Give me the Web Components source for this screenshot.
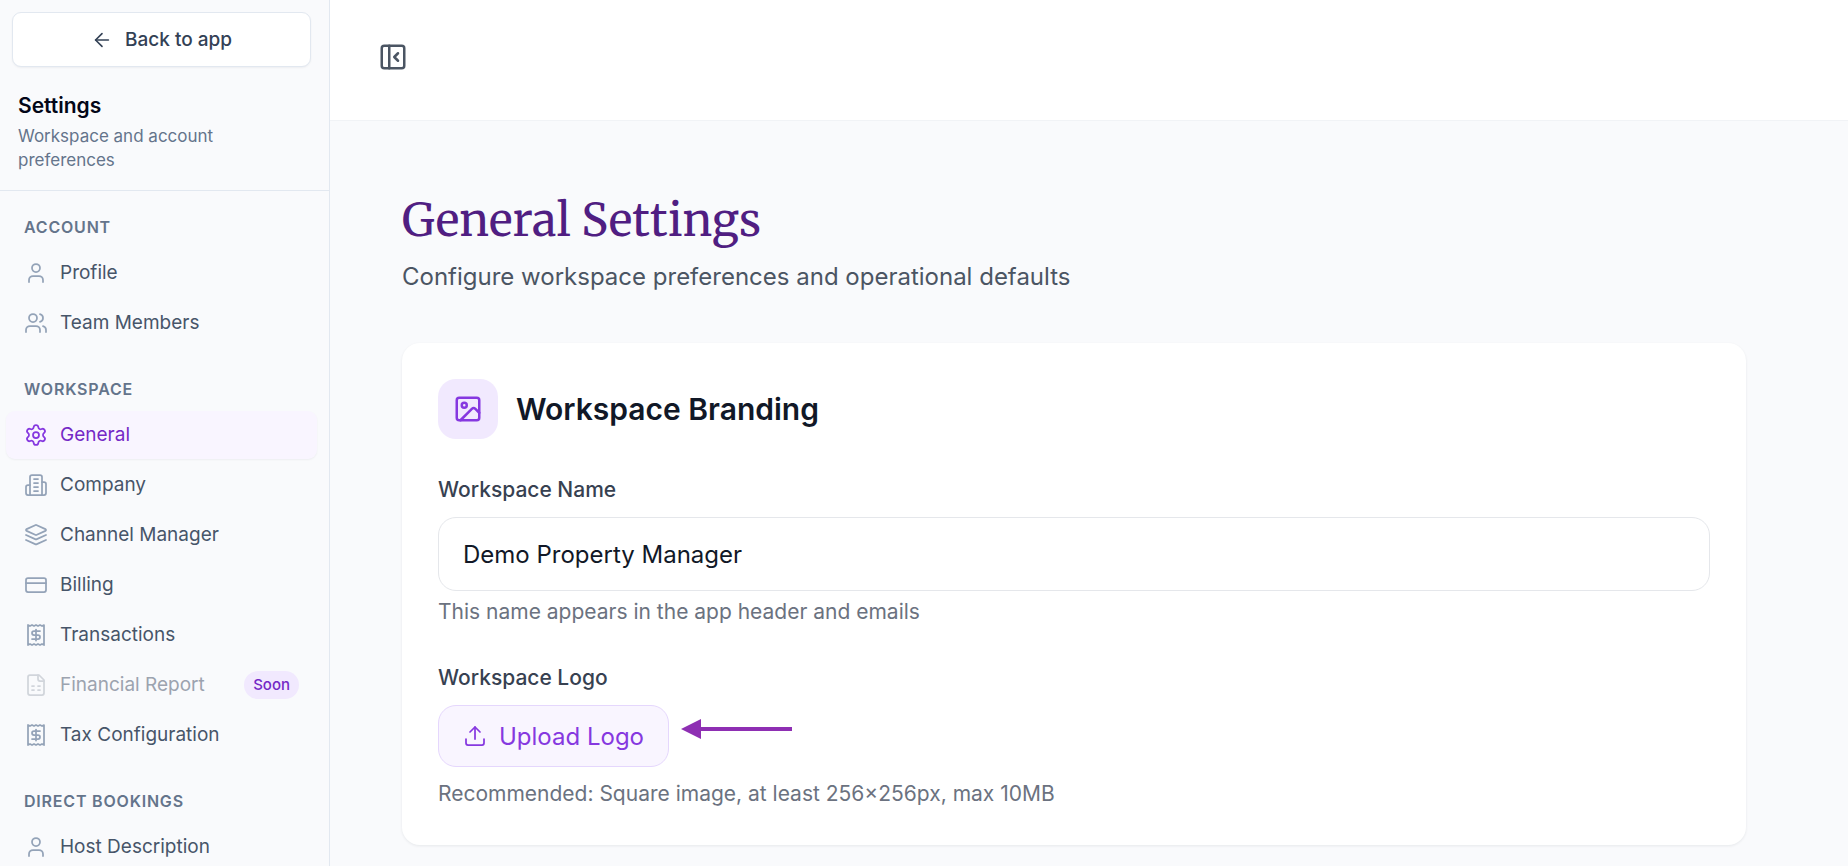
<!DOCTYPE html>
<html lang="en">
<head>
<meta charset="utf-8">
<meta name="viewport" content="width=device-width, initial-scale=1">
<title>General Settings</title>
<style>
	body {
		margin: 0;
		font-family: Inter, 'Liberation Sans', sans-serif;
		background: #f9fafc;
		color: #0f172a;
	}
</style>
</head>
<body>
<settings-app>
	<settings-sidebar slot="sidebar">
		<nav-group label="Account">
			<nav-item icon="user">Profile</nav-item>
			<nav-item icon="users">Team Members</nav-item>
		</nav-group>
		<nav-group label="Workspace">
			<nav-item icon="settings" active>General</nav-item>
			<nav-item icon="building">Company</nav-item>
			<nav-item icon="layers">Channel Manager</nav-item>
			<nav-item icon="card">Billing</nav-item>
			<nav-item icon="receipt">Transactions</nav-item>
			<nav-item icon="sheet" badge="Soon" disabled>Financial Report</nav-item>
			<nav-item icon="receipt">Tax Configuration</nav-item>
		</nav-group>
		<nav-group label="Direct Bookings">
			<nav-item icon="user">Host Description</nav-item>
		</nav-group>
	</settings-sidebar>

	<page-heading>
		General Settings
		<span slot="description">Configure workspace preferences and operational defaults</span>
	</page-heading>
	<settings-card icon="image" heading="Workspace Branding">
		<text-field
			label="Workspace Name"
			value="Demo Property Manager"
			hint="This name appears in the app header and emails"
		></text-field>
		<upload-field
			label="Workspace Logo"
			action="Upload Logo"
			hint="Recommended: Square image, at least 256×256px, max 10MB"
		></upload-field>
	</settings-card>
</settings-app>

<script>
const ICONS = {
	back: '<path d="m12 19-7-7 7-7"/><path d="M19 12H5"/>',
	panel: '<rect width="18" height="18" x="3" y="3" rx="2"/><path d="M9 3v18"/><path d="m16 15-3-3 3-3"/>',
	user: '<path d="M19 21v-2a4 4 0 0 0-4-4H9a4 4 0 0 0-4 4v2"/><circle cx="12" cy="7" r="4"/>',
	users: '<path d="M16 21v-2a4 4 0 0 0-4-4H6a4 4 0 0 0-4 4v2"/><circle cx="9" cy="7" r="4"/><path d="M22 21v-2a4 4 0 0 0-3-3.87"/><path d="M16 3.13a4 4 0 0 1 0 7.75"/>',
	settings: '<path d="M9.671 4.136a2.34 2.34 0 0 1 4.659 0 2.34 2.34 0 0 0 3.319 1.915 2.34 2.34 0 0 1 2.33 4.033 2.34 2.34 0 0 0 0 3.831 2.34 2.34 0 0 1-2.33 4.033 2.34 2.34 0 0 0-3.319 1.915 2.34 2.34 0 0 1-4.659 0 2.34 2.34 0 0 0-3.32-1.915 2.34 2.34 0 0 1-2.33-4.033 2.34 2.34 0 0 0 0-3.831A2.34 2.34 0 0 1 6.35 6.051a2.34 2.34 0 0 0 3.319-1.915"/><circle cx="12" cy="12" r="3"/>',
	building: '<path d="M6 22V4a2 2 0 0 1 2-2h8a2 2 0 0 1 2 2v18Z"/><path d="M6 12H4a2 2 0 0 0-2 2v6a2 2 0 0 0 2 2h2"/><path d="M18 9h2a2 2 0 0 1 2 2v9a2 2 0 0 1-2 2h-2"/><path d="M10 6h4"/><path d="M10 10h4"/><path d="M10 14h4"/><path d="M10 18h4"/>',
	layers: '<path d="m12.83 2.18a2 2 0 0 0-1.66 0L2.6 6.08a1 1 0 0 0 0 1.83l8.58 3.91a2 2 0 0 0 1.66 0l8.58-3.9a1 1 0 0 0 0-1.83Z"/><path d="m22 12-9.17 4.16a2 2 0 0 1-1.66 0L2 12"/><path d="m22 17-9.17 4.16a2 2 0 0 1-1.66 0L2 17"/>',
	card: '<rect width="20" height="14" x="2" y="5" rx="2"/><path d="M2 10h20"/>',
	receipt: '<path d="M4 2v20l2-1 2 1 2-1 2 1 2-1 2 1 2-1 2 1V2l-2 1-2-1-2 1-2-1-2 1-2-1-2 1Z"/><path d="M16 8h-6a2 2 0 1 0 0 4h4a2 2 0 1 1 0 4H8"/><path d="M12 17.5v-11"/>',
	sheet: '<path d="M15 2H6a2 2 0 0 0-2 2v16a2 2 0 0 0 2 2h12a2 2 0 0 0 2-2V7Z"/><path d="M14 2v4a2 2 0 0 0 2 2h4"/><path d="M8 13h2"/><path d="M14 13h2"/><path d="M8 17h2"/><path d="M14 17h2"/>',
	image: '<rect width="18" height="18" x="3" y="3" rx="2"/><circle cx="9" cy="9" r="2"/><path d="m21 15-3.09-3.09a2 2 0 0 0-2.82 0L6 21"/>',
	upload: '<path d="M12 3v12"/><path d="m17 8-5-5-5 5"/><path d="M21 15v4a2 2 0 0 1-2 2H5a2 2 0 0 1-2-2v-4"/>',
};

function icon(name, size, stroke = 2) {
	return `<svg width="${size}" height="${size}" viewBox="0 0 24 24" fill="none" stroke="currentColor" stroke-width="${stroke}" stroke-linecap="round" stroke-linejoin="round" aria-hidden="true">${ICONS[name]}</svg>`;
}

// Shared by every element below
const BASE = `
	*, *::before, *::after { box-sizing: border-box; }
	:host { display: block; box-sizing: border-box; }
	:host([hidden]) { display: none; }
	h1, h2, p { margin: 0; }
	button, input { font: inherit; }
	button { cursor: pointer; }
	svg { display: block; flex: none; }
`;

class BaseElement extends HTMLElement {
	constructor() {
		super();
		this.attachShadow({ mode: 'open' });
	}

	connectedCallback() {
		this.shadowRoot.innerHTML = `<style>${BASE}${this.styles()}</style>${this.markup()}`;
	}
}

class SettingsApp extends BaseElement {
	styles() {
		return `
			:host { display: flex; height: 100vh; overflow: hidden; }
			.content { flex: 1; min-width: 0; overflow: hidden; }
			header {
				display: flex;
				align-items: flex-start;
				min-height: 121px;
				padding: 36px 42px;
				background: #fff;
				border-bottom: 1px solid #f1f3f6;
			}
			header button {
				padding: 6px;
				border: 0;
				border-radius: 8px;
				background: none;
				color: #4b5563;
			}
			main { padding: 72px 102px 72px 72px; }
		`;
	}

	markup() {
		return `
			<slot name="sidebar"></slot>
			<div class="content">
				<header>
					<button type="button" aria-label="Collapse sidebar">${icon('panel', 30)}</button>
				</header>
				<main><slot></slot></main>
			</div>
		`;
	}
}

class SettingsSidebar extends BaseElement {
	styles() {
		return `
			:host {
				flex: none;
				width: 330px;
				overflow: hidden;
				background: #f9fafc;
				border-right: 1px solid #e2e8f0;
			}
			.top {
				padding: 12px 18px 18px 12px;
				border-bottom: 1px solid #e2e8f0;
			}
			button {
				display: flex;
				align-items: center;
				justify-content: center;
				gap: 12px;
				width: 100%;
				height: 55px;
				border: 1px solid #e2e8f0;
				border-radius: 9px;
				background: #fff;
				box-shadow: 0 1px 2px rgba(15, 23, 42, 0.05);
				color: #334155;
				font-size: 19px;
				font-weight: 500;
			}
			.intro { padding: 24px 72px 0 6px; }
			h2 {
				color: #020617;
				font-size: 21px;
				font-weight: 600;
				line-height: 30px;
			}
			p {
				margin-top: 3px;
				color: #64748b;
				font-size: 17px;
				line-height: 24px;
			}
			nav {
				display: flex;
				flex-direction: column;
				gap: 30px;
				padding: 24px 12px 24px 6px;
			}
		`;
	}

	markup() {
		return `
			<div class="top">
				<button type="button">${icon('back', 22, 1.75)}Back to app</button>
				<div class="intro">
					<h2>Settings</h2>
					<p>Workspace and account preferences</p>
				</div>
			</div>
			<nav aria-label="Settings"><slot></slot></nav>
		`;
	}
}

class NavGroup extends BaseElement {
	styles() {
		return `
			.label {
				margin-bottom: 10px;
				padding: 0 18px;
				color: #64748b;
				font-size: 16px;
				font-weight: 600;
				line-height: 24px;
				letter-spacing: 0.05em;
				text-transform: uppercase;
			}
			.items { display: grid; gap: 2px; }
		`;
	}

	markup() {
		return `
			<div class="label">${this.getAttribute('label')}</div>
			<div class="items"><slot></slot></div>
		`;
	}
}

class NavItem extends BaseElement {
	styles() {
		return `
			a {
				display: flex;
				align-items: center;
				gap: 12px;
				min-height: 48px;
				padding: 10px 18px;
				border-radius: 9px;
				color: #475569;
				font-size: 19px;
				line-height: 24px;
				text-decoration: none;
			}
			svg { color: #94a3b8; }
			.text { flex: 1; white-space: nowrap; }
			.badge {
				padding: 0 9px;
				border-radius: 14px;
				background: #f1e9fe;
				color: #7429c6;
				font-size: 15px;
				font-weight: 500;
				line-height: 28px;
			}
			:host([active]) a {
				background: #f9f5ff;
				box-shadow: 0 1px 2px rgba(15, 23, 42, 0.05);
				color: #7429c6;
			}
			:host([active]) svg { color: #8638e0; }
			:host([disabled]) a { color: #9ca3af; }
			:host([disabled]) svg { color: #d1d5db; }
		`;
	}

	markup() {
		const badge = this.getAttribute('badge');
		const state = this.hasAttribute('active')
			? 'aria-current="page"'
			: this.hasAttribute('disabled')
				? 'aria-disabled="true"'
				: '';
		return `
			<a href="#" ${state}>
				${icon(this.getAttribute('icon'), 24, 1.75)}
				<span class="text"><slot></slot></span>
				${badge ? `<span class="badge">${badge}</span>` : ''}
			</a>
		`;
	}
}

class PageHeading extends BaseElement {
	styles() {
		return `
			:host { margin-bottom: 48px; }
			h1 {
				color: #501e82;
				font-family: Merriweather, 'DejaVu Serif Condensed', 'DejaVu Serif', serif;
				font-size: 45px;
				font-weight: 400;
				line-height: 54px;
			}
			p {
				margin-top: 12px;
				color: #4b5563;
				font-size: 24px;
				line-height: 36px;
			}
		`;
	}

	markup() {
		return `
			<h1><slot></slot></h1>
			<p><slot name="description"></slot></p>
		`;
	}
}

class SettingsCard extends BaseElement {
	styles() {
		return `
			:host {
				display: flex;
				flex-direction: column;
				gap: 36px;
				padding: 36px;
				border-radius: 18px;
				background: #fff;
				box-shadow: 0 1px 3px rgba(15, 23, 42, 0.08);
			}
			.head { display: flex; align-items: center; gap: 18px; }
			.icon {
				display: grid;
				place-items: center;
				width: 60px;
				height: 60px;
				border-radius: 18px;
				background: #f1e9fe;
				color: #8638e0;
			}
			h2 {
				color: #111827;
				font-size: 30px;
				font-weight: 600;
				line-height: 42px;
			}
		`;
	}

	markup() {
		return `
			<div class="head">
				<div class="icon">${icon(this.getAttribute('icon'), 30)}</div>
				<h2>${this.getAttribute('heading')}</h2>
			</div>
			<slot></slot>
		`;
	}
}

const FIELD = `
	label {
		display: block;
		margin-bottom: 12px;
		color: #374151;
		font-size: 21px;
		font-weight: 500;
		line-height: 30px;
	}
	p {
		color: #6b7280;
		font-size: 21px;
		line-height: 30px;
	}
`;

class TextField extends BaseElement {
	styles() {
		return `
			${FIELD}
			input {
				display: block;
				width: 100%;
				height: 74px;
				padding: 0 24px;
				border: 1px solid #e5e7eb;
				border-radius: 18px;
				background: #fff;
				color: #111827;
				font-size: 24px;
			}
			p { margin-top: 6px; }
		`;
	}

	markup() {
		return `
			<label for="field">${this.getAttribute('label')}</label>
			<input id="field" type="text" value="${this.getAttribute('value')}" aria-describedby="hint">
			<p id="hint">${this.getAttribute('hint')}</p>
		`;
	}
}

class UploadField extends BaseElement {
	styles() {
		return `
			${FIELD}
			.row { display: flex; align-items: flex-start; gap: 12px; }
			button {
				display: flex;
				align-items: center;
				gap: 12px;
				height: 62px;
				padding: 0 24px;
				border: 1px solid #e5d7fd;
				border-radius: 18px;
				background: #f9f5ff;
				color: #8638e0;
				font-size: 24px;
			}
			p { margin-top: 12px; }
		`;
	}

	markup() {
		return `
			<label for="upload">${this.getAttribute('label')}</label>
			<div class="row">
				<button id="upload" type="button" aria-describedby="hint">
					${icon('upload', 24, 1.75)}${this.getAttribute('action')}
				</button>
				<svg width="111" height="48" viewBox="0 0 111 48" fill="#8e2fb3" aria-hidden="true">
					<path d="M0 24 20 14v8h91v4H20v8Z"/>
				</svg>
			</div>
			<p id="hint">${this.getAttribute('hint')}</p>
		`;
	}
}

customElements.define('settings-app', SettingsApp);
customElements.define('settings-sidebar', SettingsSidebar);
customElements.define('nav-group', NavGroup);
customElements.define('nav-item', NavItem);
customElements.define('page-heading', PageHeading);
customElements.define('settings-card', SettingsCard);
customElements.define('text-field', TextField);
customElements.define('upload-field', UploadField);
</script>
</body>
</html>
